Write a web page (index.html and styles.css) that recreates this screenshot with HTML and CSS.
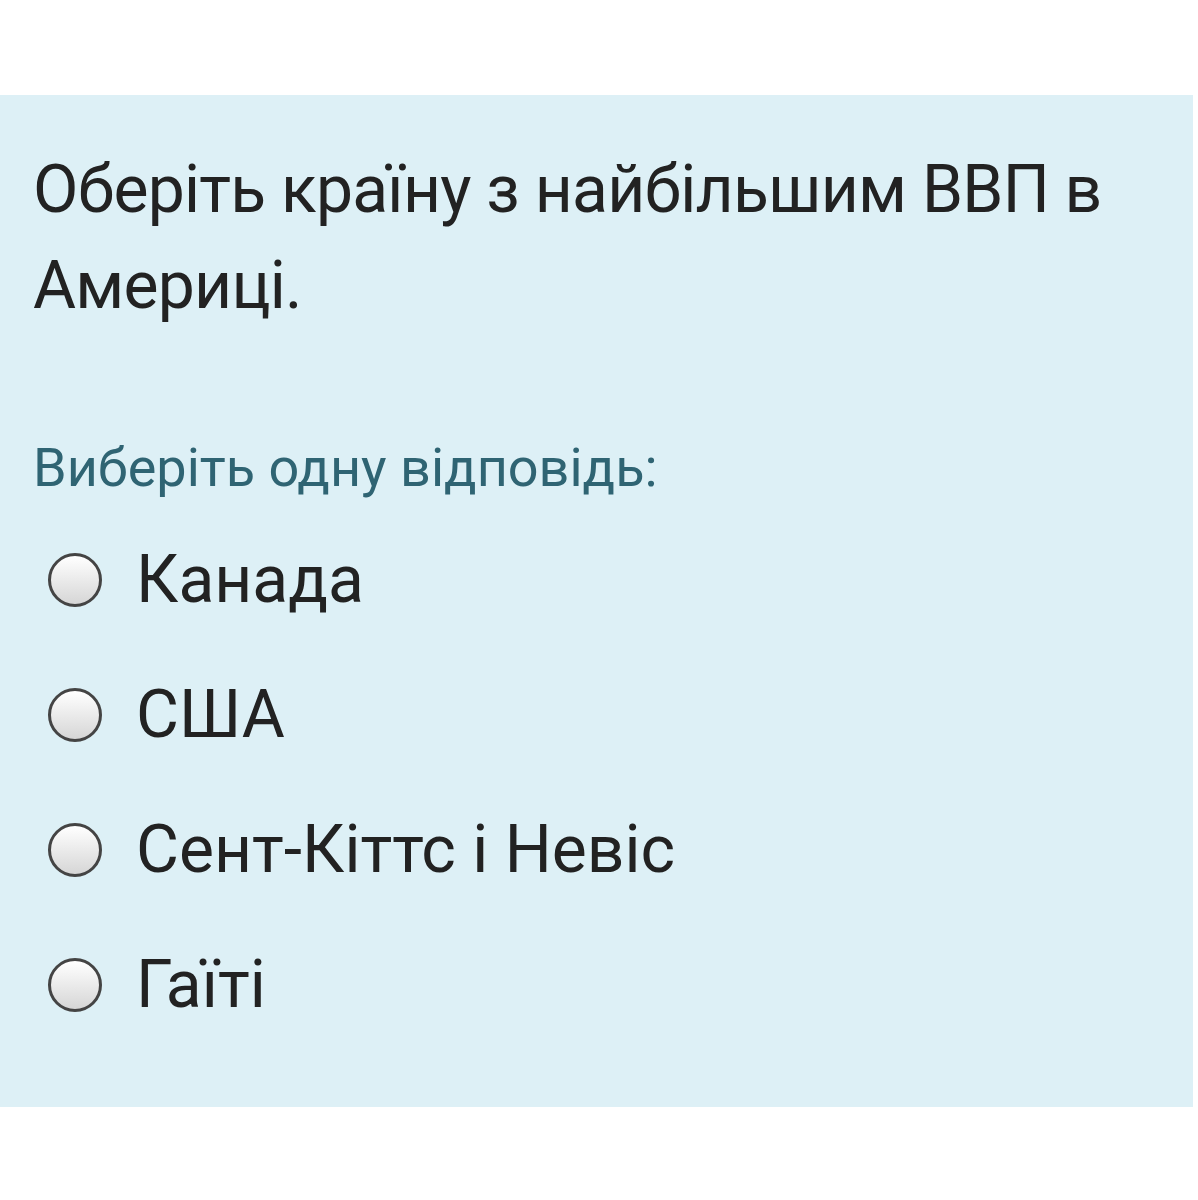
FILE: index.html
```html
<!DOCTYPE html>
<html lang="uk">
<head>
<meta charset="utf-8">
<link rel="stylesheet" href="styles.css">
</head>
<body>
<div class="panel">
  <div class="question">Оберіть країну з найбільшим ВВП в Америці.</div>
  <div class="prompt">Виберіть одну відповідь:</div>
  <div class="answers">
    <label class="answer"><span class="radio"></span><span class="text">Канада</span></label>
    <label class="answer"><span class="radio"></span><span class="text">США</span></label>
    <label class="answer"><span class="radio"></span><span class="text">Сент-Кіттс і Невіс</span></label>
    <label class="answer"><span class="radio"></span><span class="text">Гаїті</span></label>
  </div>
</div>
</body>
</html>
```
FILE: styles.css
```css
html, body {
  margin: 0;
  padding: 0;
  background: #ffffff;
}
body {
  font-family: Roboto, "Noto Sans", sans-serif;
  color: #222222;
}
.panel {
  margin-top: 95px;
  width: 1193px;
  height: 1012px;
  box-sizing: border-box;
  background: #ddf0f6;
  padding: 47px 0 0 33px;
}
.question {
  font-size: 66px;
  line-height: 96px;
  letter-spacing: -0.75px;
  width: 1100px;
}
.prompt {
  margin-top: 104px;
  font-size: 54px;
  line-height: 60px;
  color: #2f6473;
}
.answers {
  display: flex;
  flex-direction: column;
  margin-top: 14px;
}
.answer {
  display: flex;
  align-items: center;
  height: 135px;
}
.radio {
  width: 48px;
  height: 48px;
  margin-left: 15px;
  border: 3px solid #444444;
  border-radius: 50%;
  background: linear-gradient(#ffffff, #d6d6d6);
  flex: none;
}
.text {
  margin-left: 34px;
  font-size: 66px;
  line-height: 80px;
}
```
